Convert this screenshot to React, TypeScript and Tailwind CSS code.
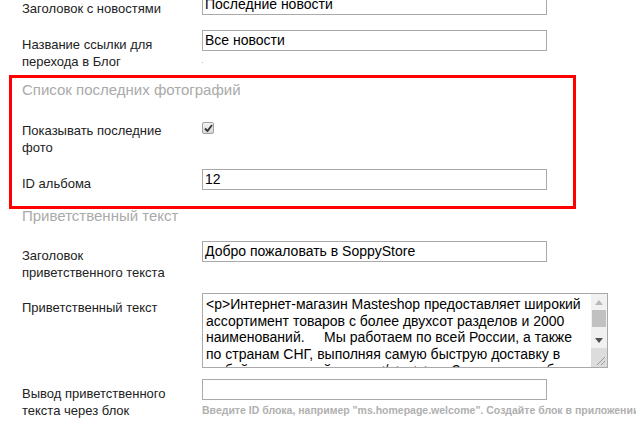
import React from "react";

const font = "font-['Liberation_Sans',Arial,sans-serif]";

// Поле ввода с серой рамкой
function TextField({ value }: { value?: string }) {
    return (
        <div className="w-[345px] h-[21px] border border-[#a9a9a9] bg-white px-[2px] text-[14px] leading-[19px] text-black whitespace-nowrap overflow-hidden">
            {value}
        </div>
    );
}

function Row({ label, children, className = "" }: { label: React.ReactNode; children: React.ReactNode; className?: string }) {
    return (
        <div className={`flex items-start ${className}`}>
            <div className="w-[202px] shrink-0 pl-[22px] pr-[30px] pt-[6px] text-[13px] leading-[17px] text-[#222]">{label}</div>
            <div className="flex flex-col">{children}</div>
        </div>
    );
}

const welcomeLines = [
    "<p>Интернет-магазин Masteshop предоставляет широкий",
    "ассортимент товаров с более двухсот разделов и 2000",
    "наименований.     Мы работаем по всей России, а также",
    "по странам СНГ, выполняя самую быструю доставку в",
    "любой населенный пункт. </p> <p>     За пять лет работы",
];

function FakeTextarea() {
    return (
        <div className="w-[406px] h-[75px] border border-[#a9a9a9] bg-white flex overflow-hidden">
            <div className="flex-1 overflow-hidden pl-[3px] pt-[2px] text-[14px] leading-[16.6px] text-black whitespace-pre">
                {welcomeLines.map((l, i) => (
                    <div key={i}>{l}</div>
                ))}
            </div>
            {/* полоса прокрутки */}
            <div className="w-[16px] h-full flex flex-col bg-[#f1f1f1]">
                <div className="h-[16px] flex items-center justify-center">
                    <svg width="8" height="5" viewBox="0 0 8 5"><path d="M0 5 L4 0 L8 5 Z" fill="#b8b8b8" /></svg>
                </div>
                <div className="mx-[1px] h-[17px] bg-[#c1c1c1]" />
                <div className="h-[16px] mt-[5px] flex items-center justify-center">
                    <svg width="8" height="5" viewBox="0 0 8 5"><path d="M0 0 L4 5 L8 0 Z" fill="#505050" /></svg>
                </div>
                <div className="flex-1 bg-[#dcdcdc] flex items-end justify-end p-[2px]">
                    <svg width="9" height="9" viewBox="0 0 9 9">
                        <path d="M1 9 L9 1 M5 9 L9 5" stroke="#9a9a9a" strokeWidth="1" />
                    </svg>
                </div>
            </div>
        </div>
    );
}

export default function App() {
    return (
        <div className={`relative w-[636px] h-[424px] overflow-hidden bg-white ${font}`}>
            <div className="-mt-[6px]">
                <Row label="Заголовок с новостями">
                    <TextField value="Последние новости" />
                </Row>

                <Row label="Название ссылки для перехода в Блог" className="mt-[13px]">
                    <TextField value="Все новости" />
                    <span className="mt-[11px] w-px h-px bg-[#9cc]" />
                </Row>

                <div className="mt-[10px] pl-[22px] text-[15px] leading-[20px] text-[#aaa]">Список последних фотографий</div>

                <Row label="Показывать последние фото" className="mt-[16px]">
                    <div className="mt-[6px] w-[12px] h-[12px] rounded-[2px] border border-[#a0a0a0] bg-gradient-to-b from-[#f4f4f4] to-[#d8d8d8] flex items-center justify-center">
                        <svg width="9" height="8" viewBox="0 0 9 8">
                            <path d="M1 4.5 L3.5 7 L8 1" fill="none" stroke="#333" strokeWidth="1.8" />
                        </svg>
                    </div>
                </Row>

                <Row label="ID альбома" className="mt-[13px]">
                    <TextField value="12" />
                </Row>

                <div className="mt-[14px] pl-[22px] text-[15px] leading-[20px] text-[#aaa]">Приветственный текст</div>

                <Row label="Заголовок приветственного текста" className="mt-[15px]">
                    <TextField value="Добро пожаловать в SoppyStore" />
                </Row>

                <Row label="Приветственный текст" className="mt-[12px]">
                    <FakeTextarea />
                </Row>

                <Row label="Вывод приветственного текста через блок" className="mt-[11px]">
                    <TextField />
                    <div className="mt-[3px] text-[10.5px] leading-[14px] font-bold text-[#b0b0b0] whitespace-nowrap">
                        Введите ID блока, например "ms.homepage.welcome". Создайте блок в приложении
                    </div>
                </Row>
            </div>

            {/* красная рамка-выделение поверх формы */}
            <div className="absolute left-[9px] top-[75px] w-[567px] h-[134px] border-[3px] border-[#ff0000] pointer-events-none" />
        </div>
    );
}
